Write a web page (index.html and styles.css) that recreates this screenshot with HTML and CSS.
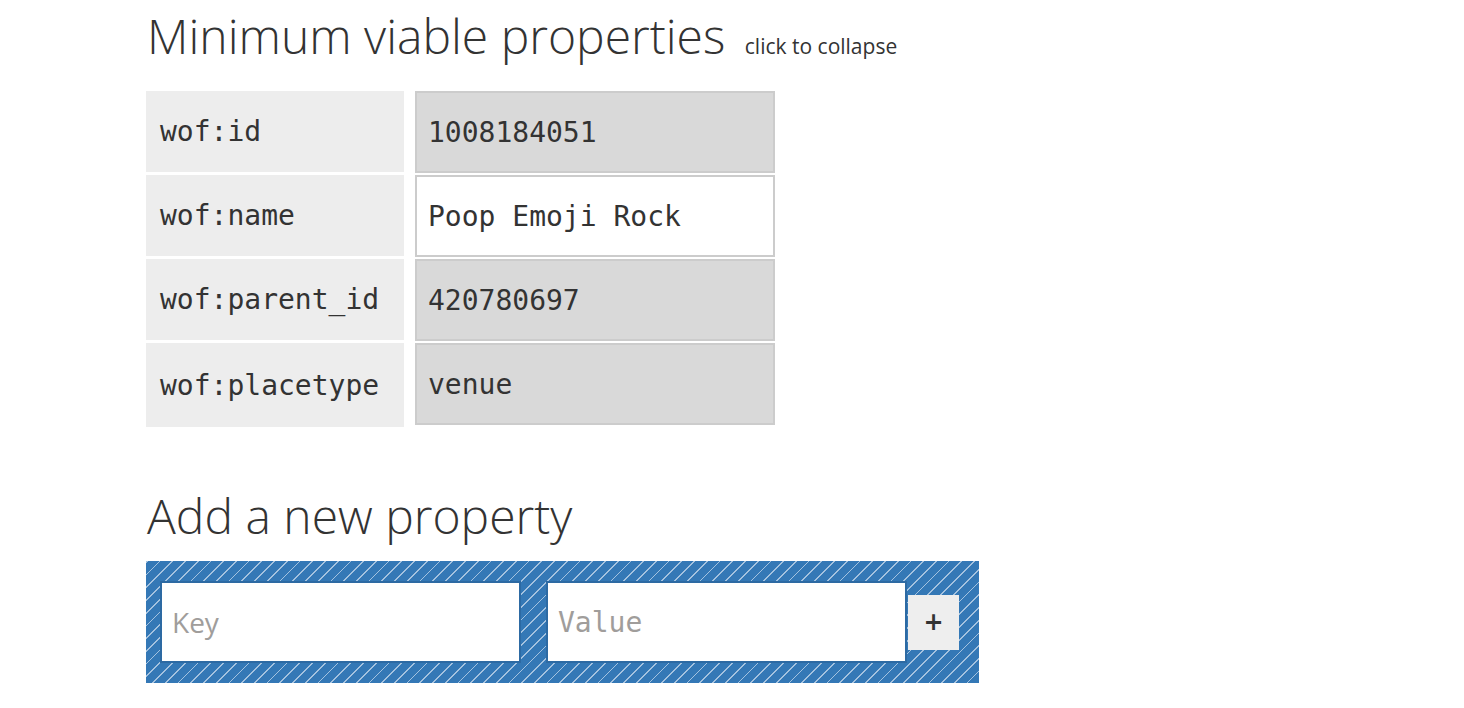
FILE: index.html
```html
<!DOCTYPE html>
<html lang="en">
<head>
<meta charset="utf-8">
<title>Minimum viable properties</title>
<link rel="stylesheet" href="styles.css">
</head>
<body>
<main class="page">
  <h2 class="section-title">Minimum viable properties <span class="toggle">click to collapse</span></h2>
  <div class="props">
    <div class="prop-key">wof:id</div>
    <div class="prop-value readonly">1008184051</div>
    <div class="prop-key">wof:name</div>
    <div class="prop-value editable">Poop Emoji Rock</div>
    <div class="prop-key">wof:parent_id</div>
    <div class="prop-value readonly">420780697</div>
    <div class="prop-key">wof:placetype</div>
    <div class="prop-value readonly">venue</div>
  </div>
  <h2 class="section-title add-title">Add a new property</h2>
  <form class="add-prop">
    <input class="field key-field" type="text" placeholder="Key">
    <input class="field value-field" type="text" placeholder="Value">
    <button class="add-btn" type="button">+</button>
  </form>
</main>
</body>
</html>
```
FILE: styles.css
```css
html, body {
  margin: 0;
  padding: 0;
  background: #fff;
  color: #333;
}
.page {
  padding: 0 0 0 146px;
}
.section-title {
  font-family: "Open Sans", sans-serif;
  font-weight: 300;
  font-size: 48px;
  line-height: 1;
  margin: 0;
  padding: 12px 0 0 1px;
  height: 79px;
  box-sizing: border-box;
  color: #333;
}
.toggle {
  font-size: 21px;
  font-weight: 400;
  margin-left: 7px;
  color: #333;
}
.props {
  display: grid;
  grid-template-columns: 258px 360px;
  grid-auto-rows: 81px;
  column-gap: 11px;
  row-gap: 3px;
  margin-top: 12px;
  font-family: "DejaVu Sans Mono", monospace;
  font-size: 28px;
}
.prop-key {
  background: #ededed;
  padding-left: 14px;
  display: flex;
  align-items: center;
}
.prop-key:nth-last-child(2) {
  height: 84px;
}
.prop-value {
  border: 2px solid #ccc;
  padding-left: 11px;
  display: flex;
  align-items: center;
  height: 82px;
  box-sizing: border-box;
}
.readonly {
  background: #d9d9d9;
}
.editable {
  background: #fff;
}
.add-title {
  margin-top: 68px;
  padding-top: 0;
  height: 69px;
}
.add-prop {
  width: 833px;
  height: 122px;
  box-sizing: border-box;
  margin: 0;
  padding: 20px 20px 20px 14px;
  display: flex;
  align-items: center;
  background: repeating-linear-gradient(-45deg, #3478b6 0, #3478b6 7.8px, #a4c2df 7.8px, #a4c2df 9px);
}
.field {
  width: 361px;
  height: 82px;
  box-sizing: border-box;
  border: 2px solid #2d6aa3;
  background: #fff;
  padding: 0 10px;
  font-size: 28px;
  color: #333;
  outline: none;
  margin: 0;
}
.key-field {
  font-family: "Open Sans", sans-serif;
  margin-right: 25px;
}
.value-field {
  font-family: "DejaVu Sans Mono", monospace;
}
.field::placeholder {
  color: #a09d9b;
}
.add-btn {
  width: 52px;
  height: 55px;
  margin-left: 1px;
  border: none;
  background: #eee;
  font-family: "DejaVu Sans", sans-serif;
  font-weight: bold;
  font-size: 24px;
  color: #333;
  padding: 0;
}
```
